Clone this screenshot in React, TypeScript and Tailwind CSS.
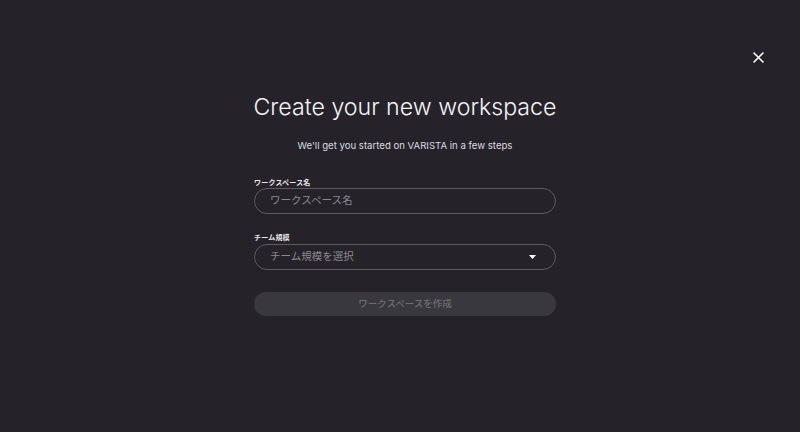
import React from "react";

export default function App() {
  return (
    <div
      className="w-[800px] h-[432px] bg-[#252329] relative text-white"
      style={{ fontFamily: '"Noto Sans", "Noto Sans CJK JP", sans-serif' }}
    >
      <button className="absolute left-[752px] top-[51px] w-[12px] h-[12px] flex items-center justify-center">
        <svg width="11" height="11" viewBox="0 0 11 11">
          <path d="M1 1 L10 10 M10 1 L1 10" stroke="#ffffff" strokeWidth="1.6" strokeLinecap="round" />
        </svg>
      </button>
      <div className="flex flex-col items-center pt-[91px] pl-[10px]">
        <h1 className="text-[23.2px] leading-[32px] font-light text-[#f4f3f6]" style={{ fontFamily: 'Inter, "Liberation Sans", sans-serif' }}>
          Create your new workspace
        </h1>
        <p className="mt-[16px] text-[9.6px] leading-[14px] text-[#dddce0]" style={{ fontFamily: 'Inter, "Liberation Sans", sans-serif' }}>
          We'll get you started on VARISTA in a few steps
        </p>
        <div className="w-[302px] mt-[25px] flex flex-col">
          <label className="block text-[7px] leading-[9px] font-bold text-[#e8e7ea] tracking-[0.2px]">ワークスペース名</label>
          <div className="mt-[1px] h-[26px] rounded-full border border-[#5d5b62] flex items-center px-[15px]">
            <span className="text-[10.5px] text-[#8b8990]">ワークスペース名</span>
          </div>
          <label className="block mt-[19px] text-[7px] leading-[9px] font-bold text-[#e8e7ea] tracking-[0.2px]">チーム規模</label>
          <div className="mt-[2px] h-[26px] rounded-full border border-[#5d5b62] flex items-center justify-between px-[15px]">
            <span className="text-[10.5px] text-[#8b8990]">チーム規模を選択</span>
            <svg width="7" height="4" viewBox="0 0 7 4" className="mr-[4px]">
              <path d="M0 0 L7 0 L3.5 4 Z" fill="#ffffff" />
            </svg>
          </div>
          <div className="mt-[22px] h-[24px] rounded-full bg-[#3a383f] flex items-center justify-center">
            <span className="text-[9.5px] font-medium text-[#6f6d74]">ワークスペースを作成</span>
          </div>
        </div>
      </div>
    </div>
  );
}
